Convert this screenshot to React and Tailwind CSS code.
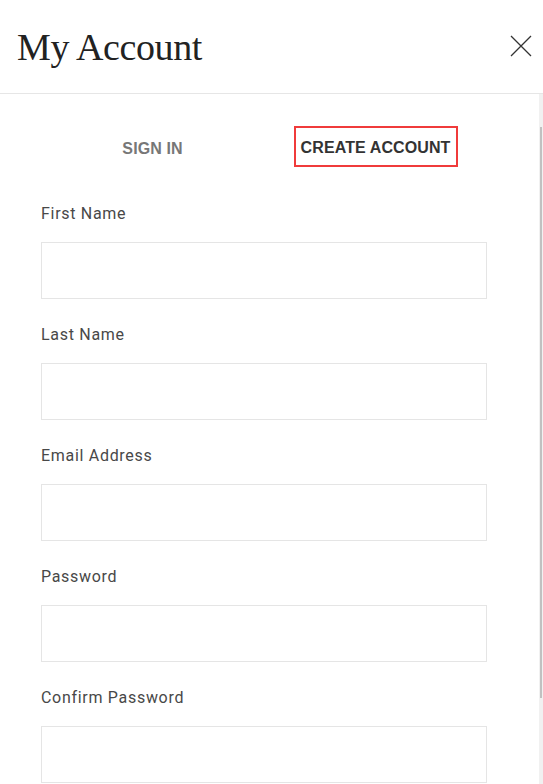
import { useLayoutEffect, useRef } from "react";

const fields = ["First Name", "Last Name", "Email Address", "Password", "Confirm Password"];

function Field({ label }) {
  return (
    <div className="flex flex-col">
      <label className="font-['Roboto',sans-serif] text-[16px] leading-[20px] tracking-[0.7px] text-[#484848]">{label}</label>
      <input
        type={label.includes("Password") ? "password" : "text"}
        className="mt-[18px] h-[57px] w-full border border-[#e5e5e5] bg-white px-3 outline-none"
      />
    </div>
  );
}

export default function App() {
  const scroller = useRef(null);

  useLayoutEffect(() => {
    if (scroller.current) scroller.current.scrollTop = 40;
  }, []);

  return (
    <div className="flex h-screen flex-col bg-white">
      <header className="flex h-[94px] shrink-0 items-start justify-between border-b border-[#e6e6e6] pl-[17px] pr-[11px] pt-[28px]">
        <h1 className="font-['Liberation_Serif',serif] text-[38px] leading-[38px] tracking-[-0.4px] text-[#222]">
          My Account
        </h1>
        <button className="mt-[7px] text-[#333]" aria-label="Close">
          <svg width="22" height="22" viewBox="0 0 22 22" fill="none" stroke="currentColor" strokeWidth="1.3">
            <path d="M1 1 21 21M21 1 1 21" />
          </svg>
        </button>
      </header>

      <div className="relative min-h-0 flex-1">
        <div ref={scroller} className="h-full overflow-y-auto">
          <div className="ml-[41px] w-[446px] pb-[105px] pt-[72px]">
            <div className="grid grid-cols-2 font-['Liberation_Sans',sans-serif] text-[16px] font-bold tracking-[0.1px]">
              <div className="flex items-center justify-center pt-[4px]">
                <button className="text-[#777]">SIGN IN</button>
              </div>
              <div className="flex justify-center">
                <button className="flex h-[41px] w-[164px] items-center justify-center border-2 border-[#f03b3b] pt-[3px] text-[#333]">
                  CREATE ACCOUNT
                </button>
              </div>
            </div>

            <div className="mt-[37px] flex flex-col gap-[26px]">
              {fields.map((f) => (
                <Field key={f} label={f} />
              ))}
            </div>
          </div>
        </div>

        {/* scrollbar as painted by the page */}
        <div className="pointer-events-none absolute bottom-0 right-0 top-0 w-[4px] bg-[#f1f1f1]">
          <div className="ml-[1px] mt-[33px] h-[571px] w-[2px] bg-[#c1c1c1]" />
        </div>
      </div>
    </div>
  );
}
